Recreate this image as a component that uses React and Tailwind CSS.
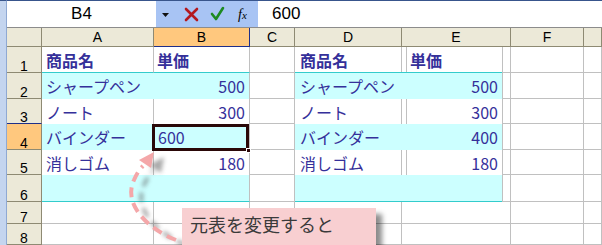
import React from "react";

const jp = "font-['Noto_Sans_CJK_JP','Noto_Sans',sans-serif]";
const ar = "font-['Liberation_Sans',Arial,sans-serif]";

const hdrCell = "bg-[#ece9d8] border-r border-b border-[#8e8a73] flex items-center justify-center text-[14px] text-black " + ar;
const gridCell = "border-r border-b border-[#c0c0c0]";
const ink = "text-[#35309a]";

const rowHeights = ["h-[26px]", "h-[26px]", "h-[25px]", "h-[26px]", "h-[25px]", "h-[27px]"];

const data = [
  { name: "商品名", price: "単価", head: true },
  { name: "シャープペン", price: "500", fill: true },
  { name: "ノート", price: "300" },
  { name: "バインダー", price: "400", fill: true },
  { name: "消しゴム", price: "180" },
  { name: "", price: "", fill: true },
];

const RowHead = ({ n, active }) => (
  <div
    className={
      active
        ? "bg-[#ffc87e] border-r border-b border-[#8e8a73] border-t border-t-[#1f2f8a] -mt-px flex items-end justify-center text-[14px] leading-[12px] text-black " + ar
        : "bg-[#ece9d8] border-r border-b border-[#8e8a73] flex items-end justify-center text-[14px] leading-[12px] text-black " + ar
    }
  >
    {n}
  </div>
);

const NameCell = ({ row, i }) => {
  const last = i === 5;
  const first = i === 0;
  let cls = "flex items-center pl-[4px] text-[16px] " + jp + " " + ink;
  if (row.fill) cls += " bg-[#ccffff]";
  else cls += " border-r border-[#c0c0c0]";
  if (first || last) cls += " border-b border-b-[#33cccc]";
  if (row.head) cls += " font-bold";
  return <div className={cls}>{row.name}</div>;
};

const PriceCell = ({ row, i }) => {
  const last = i === 5;
  const first = i === 0;
  let cls = "flex items-center border-r border-[#c0c0c0] text-[16px] " + jp + " " + ink;
  if (row.fill) cls += " bg-[#ccffff]";
  if (first || last) cls += " border-b border-b-[#33cccc]";
  if (row.head) cls += " font-bold pl-[3px]";
  else cls += " justify-end pr-[4px]";
  return <div className={cls}>{row.price}</div>;
};

const Picture = () => (
  <div className="col-start-5 col-span-2 row-start-2 row-span-6 flex flex-col border-r border-[#c0c0c0]">
    {data.map((row, i) => {
      const edge = i === 0 || i === 5;
      return (
        <div
          key={i}
          className={
            rowHeights[i] +
            " flex " +
            (row.fill ? "bg-[#ccffff] " : "") +
            (edge ? "border-b border-[#33cccc] " : "")
          }
        >
          <div
            className={
              "w-[107px] flex items-center pl-[5px] text-[16px] " +
              jp + " " + ink +
              (row.fill ? "" : " border-r border-[#c0c0c0]") +
              (row.head ? " font-bold" : "")
            }
          >
            {row.name}
          </div>
          <div className="flex-1 flex">
            <div className="w-[4px]" />
            <div
              className={
                "flex-1 flex items-center text-[16px] " +
                jp + " " + ink +
                (row.fill ? "" : " border-l border-[#c0c0c0]") +
                (row.head ? " font-bold pl-[3px]" : " justify-end pr-[4px]")
              }
            >
              {row.price}
            </div>
          </div>
        </div>
      );
    })}
  </div>
);

const FormulaBar = () => (
  <div className="h-[28px] flex border-t border-t-[#38558c] border-b border-b-[#8c8c8c] bg-white">
    <div className={"w-[149px] flex items-center justify-center text-[17px] text-black " + ar}>B4</div>
    <div className="w-[102px] bg-[#a8c4f4] flex items-center">
      <svg width="102" height="26" viewBox="0 0 102 26">
        <polygon points="6,12 13,12 9.5,16" fill="#111" />
        <path d="M30 8 L41 19 M41 8 L30 19" stroke="#b3191f" strokeWidth="2.6" strokeLinecap="round" />
        <path d="M56 13 L60 18 L67 7" stroke="#1d8a22" strokeWidth="2.6" fill="none" strokeLinecap="round" strokeLinejoin="round" />
      </svg>
      <span className="-ml-[20px] text-[14px] italic text-black font-['Liberation_Serif',serif]">
        f<span className="text-[11px]">x</span>
      </span>
    </div>
    <div className={"flex-1 flex items-center pl-[14px] text-[17px] text-black " + ar}>600</div>
  </div>
);

const App = () => {
  return (
    <div className="relative w-[602px] h-[245px] overflow-hidden bg-white flex">
      <div className="w-[7px] bg-[#c4d5ef] border-t border-t-[#38558c] border-r border-r-[#8fa9d3]" />
      <div className="flex-1 flex flex-col">
        <FormulaBar />
        <div className="flex-1 grid grid-cols-[35px_112px_96px_45px_107px_101px_8px_73px_18px] grid-rows-[19px_26px_26px_25px_26px_25px_27px_22px_21px]">
          <Picture />

          {/* column headers */}
          <div className={hdrCell} />
          <div className={hdrCell}>A</div>
          <div className={"bg-[#ffc87e] border-r border-b border-[#1f2f8a] flex items-center justify-center text-[14px] text-black " + ar}>B</div>
          <div className={hdrCell}>C</div>
          <div className={hdrCell}>D</div>
          <div className={hdrCell + " col-span-2"}>E</div>
          <div className={hdrCell}>F</div>
          <div className={hdrCell} />

          {data.map((row, i) => (
            <React.Fragment key={i}>
              <RowHead n={i + 1} active={i === 3} />
              <NameCell row={row} i={i} />
              {i === 3 ? (
                <div className={"relative flex items-end pl-[4px] pb-px bg-[#ccffff] border-r border-[#c0c0c0] text-[16px] " + jp + " " + ink}>
                  600
                  <div className="absolute -left-[2px] top-0 right-0 -bottom-[1px] border-[3px] border-[#2a0808]" />
                  <div className="absolute -right-[2px] -bottom-[3px] w-[5px] h-[5px] bg-[#2a0808] border border-white" />
                </div>
              ) : (
                <PriceCell row={row} i={i} />
              )}
              <div className={gridCell} />
              <div className={gridCell} />
              <div className={gridCell} />
              <div className={gridCell} />
            </React.Fragment>
          ))}

          {[7, 8].map((n) => (
            <React.Fragment key={n}>
              <RowHead n={n} />
              <div className={gridCell} />
              <div className={gridCell} />
              <div className={gridCell} />
              <div className={gridCell} />
              <div className={gridCell + " col-span-2"} />
              <div className={gridCell} />
              <div className={gridCell} />
            </React.Fragment>
          ))}
        </div>
      </div>

      {/* callout arrow */}
      <svg className="absolute left-0 top-0 pointer-events-none" width="602" height="245" viewBox="0 0 602 245">
        <defs>
          <filter id="blur" x="-20%" y="-20%" width="140%" height="140%">
            <feGaussianBlur stdDeviation="2" />
          </filter>
        </defs>
        <g transform="translate(10 5)" filter="url(#blur)" opacity="0.5">
          <path d="M176 240 C150 230 122 205 134 180 C137 173 140 169 143 166" stroke="#555" strokeWidth="4" fill="none" strokeDasharray="10 6" />
          <polygon points="154,152 151,168 139,160" fill="#555" />
        </g>
        <path d="M176 240 C150 230 122 205 134 180 C137 173 140 169 143 166" stroke="#f4a7a9" strokeWidth="4" fill="none" strokeDasharray="10 6" />
        <polygon points="154,152 151,168 139,160" fill="#f4a7a9" />
      </svg>

      {/* callout */}
      <div className={"absolute left-[182px] top-[208px] w-[194px] h-[50px] bg-[#f8cfd1] shadow-[6px_6px_5px_rgba(0,0,0,0.45)] pl-[8px] pt-[3px] text-[18px] text-[#3a3a3a] " + jp}>
        元表を変更すると
      </div>
    </div>
  );
};

export default App;
